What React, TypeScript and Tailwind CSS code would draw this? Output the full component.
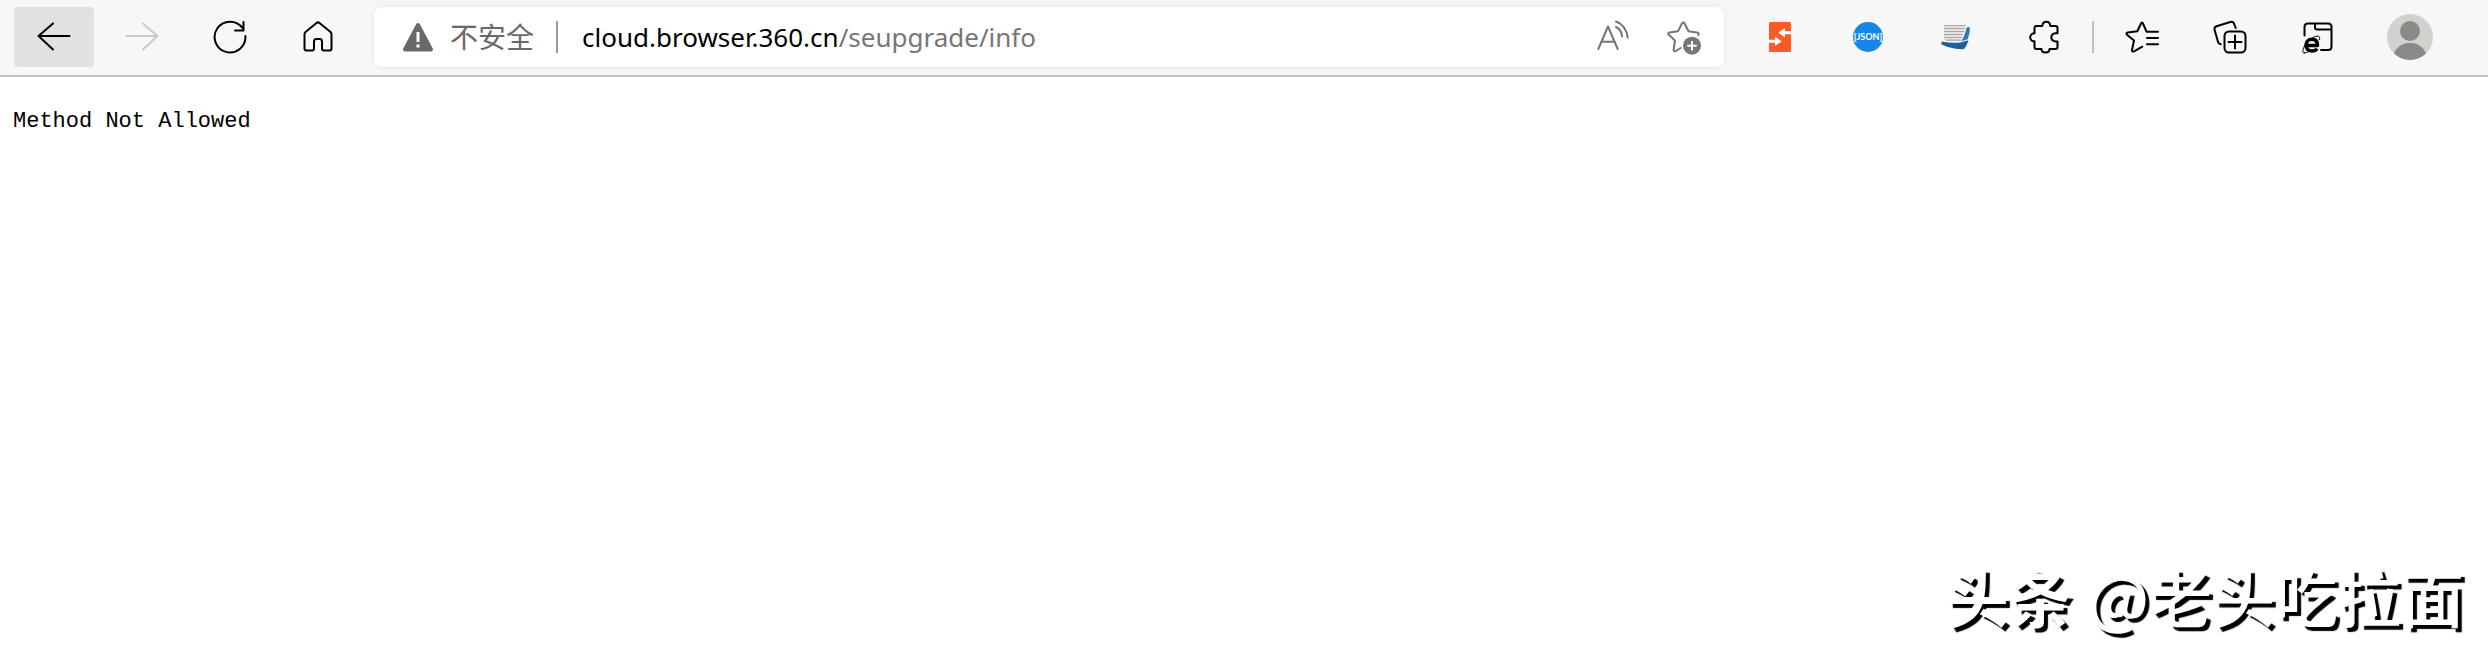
import type { ReactNode } from 'react';
import clsx from 'clsx';

interface IconButtonProps {
    label: string;
    active?: boolean;
    disabled?: boolean;
    children: ReactNode;
}

function IconButton({ label, active, disabled, children }: IconButtonProps) {
    return (
        <button
            type="button"
            aria-label={label}
            disabled={disabled}
            className={clsx(
                'flex h-[60px] w-20 shrink-0 items-center justify-center rounded-sm',
                active && 'bg-[#e1e1e1]',
                disabled ? 'text-[#cccccc]' : 'text-black',
            )}
        >
            {children}
        </button>
    );
}

function Line({ children }: { children: ReactNode }) {
    return (
        <svg viewBox="0 0 36 36" className="size-9" fill="none" stroke="currentColor" strokeWidth="2" strokeLinecap="round" strokeLinejoin="round">
            {children}
        </svg>
    );
}

function AddressBar() {
    return (
        <div className="flex h-[60px] min-w-0 flex-1 items-center rounded-lg bg-white pr-1 pl-7 font-['Noto_Sans','Noto_Sans_CJK_SC',sans-serif] text-[26px] shadow-[0_0_6px_rgba(0,0,0,0.08)]">
            <button type="button" className="flex shrink-0 items-center gap-4 text-[28px] text-[#696969]">
                <svg viewBox="0 0 32 32" className="size-8">
                    <path d="M16 4L29 28.500H3Z" fill="#696969" stroke="#696969" strokeWidth="4" strokeLinejoin="round" />
                    <path d="M16 11V21M16 23.500V26.500" stroke="white" strokeWidth="3" />
                </svg>
                不安全
            </button>
            <span className="mr-6 ml-[22px] h-8 w-0.5 bg-[#999999]" />
            <div role="textbox" aria-label="地址栏" contentEditable suppressContentEditableWarning className="min-w-0 flex-1 overflow-hidden whitespace-nowrap text-[#767676]">
                <span className="text-black">cloud.browser.360.cn</span>/seupgrade/info
            </div>
            <button type="button" aria-label="大声朗读" className="flex w-[72px] justify-center text-[#767676]">
                <Line>
                    <path d="M4.300 30L14 7.500L23.700 30M7.500 22.700H20.500M22 2.500C28 4.500 33 11 33.700 18.500M22 8C26 10 27.800 13.500 28 17.500" />
                </Line>
            </button>
            <button type="button" aria-label="添加到收藏夹" className="flex w-[72px] justify-center text-[#767676]">
                <Line>
                    <path d="M32.300 16Q33.500 13.700 31 13.400L22.500 12.300L18.500 4.300Q17.300 2.500 16.100 4.300L12 12.300L3.500 13.500Q1.300 14 2.800 15.700L9 21.500L7.600 30.500Q7.500 33 9.700 32L14.700 29" />
                    <circle cx="26" cy="26.700" r="9" fill="currentColor" stroke="none" />
                    <path d="M26 22V31.400M21.300 26.700H30.700" stroke="white" strokeLinecap="butt" />
                </Line>
            </button>
        </div>
    );
}

function Extensions() {
    return (
        <>
            <IconButton label="请求重定向">
                <svg viewBox="0 0 36 36" className="size-9">
                    <rect x="7" y="3" width="22" height="30" rx="1.500" fill="#ff5a26" />
                    <path d="M29 12.300H23V9L16.300 13.800L23 18.600V15.300H29ZM7 20.800H13V17.500L19.700 22.300L13 27.100V23.800H7Z" fill="white" />
                </svg>
            </IconButton>
            <IconButton label="JSON">
                <svg viewBox="0 0 36 36" className="size-9">
                    <circle cx="18" cy="18" r="15" fill="#1487e8" />
                    <text x="18" y="21" textAnchor="middle" fill="white" className="font-['Lato',sans-serif] text-[9px] font-bold">[JSON]</text>
                </svg>
            </IconButton>
            <IconButton label="阅读">
                <svg viewBox="0 0 36 36" className="size-9">
                    <path d="M6 6H28L22 22.500L6 21Z" fill="#e2e2e0" />
                    <path d="M6 6.500H28M6 9.500H27M6 12.500H26M6 15.500H25M6 18.500H24M8 21.200H23" stroke="#aaa9a7" strokeWidth="1.200" />
                    <path d="M28.500 9Q30 7.500 32 8.500Q32 15 29.500 20.500L23.500 22Q27 16 28.500 9Z" fill="#2d78b5" />
                    <path d="M3.500 22.500Q14 24.500 22 23.500L30.500 21.300Q29 27 26 30.300Q14 30.500 3.500 25.600Z" fill="#1f619d" />
                </svg>
            </IconButton>
            <IconButton label="扩展">
                <Line>
                    <path d="M10.500 7H16.300C16.500 4.300 18 2.800 20.300 2.800S24.100 4.300 24.300 7H29.500Q31.500 7 31.500 9V14.200H29.500Q25.300 14.800 25.300 18.300T29.500 22.400H31.500V28Q31.500 30 29.500 30H23.500C23.500 32 21.800 33.500 19.500 33.500S15.500 32 15.500 30H10.500Q8.500 30 8.500 28V22.300C6 22.300 4.200 20.600 4.200 18.300S6 14.200 8.500 14.200V9Q8.500 7 10.500 7Z" />
                </Line>
            </IconButton>
        </>
    );
}

function BrowserTools() {
    return (
        <>
            <IconButton label="收藏夹">
                <Line>
                    <path d="M34 12.700H22.500L19 4.500Q18 2.500 17 4.500L13.300 12.300L3.800 13.600Q1.500 14 3 15.700L10 21.500L8 31Q8 33.300 10 32.300L18.300 27.700M23 19H34M23 25.300H34" />
                </Line>
            </IconButton>
            <IconButton label="集锦">
                <Line>
                    <path d="M8.700 25.300Q6.500 25 6 22.800L2.600 11Q2 8.300 4.500 7.300L18.300 3Q21 2.300 22 4.700L23.700 9" />
                    <rect x="12.500" y="12.500" width="21" height="21" rx="4.500" />
                    <path d="M23 16.500V29.500M16.500 23H29.500" />
                </Line>
            </IconButton>
            <IconButton label="Internet Explorer 模式">
                <Line>
                    <path d="M4.500 16.500V8Q4.500 4.500 8 4.500H28Q31.500 4.500 31.500 8V27.500Q31.500 31 28 31H21M15 4.500V8.500Q15 10.500 17 10.500H31.500" />
                    <path d="M6.300 26.500H17.500C17.500 22 15.300 20.200 12 20.200S6 22.800 6 26.300S8.500 32 12 32Q15.500 32 17 29.600" strokeWidth="3.600" strokeLinecap="butt" />
                    <path d="M4.500 34C1.500 35 2.300 29 7 23.500S18.500 15.500 19.600 18.200Q20 19.300 19.300 20.800M4.500 34Q6.500 34 9 32.300" strokeWidth="1" />
                </Line>
            </IconButton>
            <button type="button" aria-label="个人资料" className="flex w-[88px] shrink-0 items-center justify-center">
                <span className="relative size-[46px] overflow-hidden rounded-full bg-[#d2d1ce]">
                    <span className="absolute top-[7px] left-[13px] size-5 rounded-full bg-[#8c8a88]" />
                    <span className="absolute top-[29px] left-[6px] h-8 w-[34px] rounded-full bg-[#8c8a88]" />
                </span>
            </button>
        </>
    );
}

export default function App() {
    return (
        <div className="flex min-h-screen flex-col bg-white">
            <header className="flex items-center border-b-2 border-[#c0c0c0] bg-[#f7f7f7] pt-[7px] pr-[34px] pb-2 pl-[14px]">
                <nav className="flex gap-2 pr-4">
                    <IconButton label="后退" active>
                        <Line><path d="M33.500 17H3M17 4.500L2.500 17L17 30.500" /></Line>
                    </IconButton>
                    <IconButton label="前进" disabled>
                        <Line><path d="M2.500 17H33M19 4.500L33.500 17L19 30.500" /></Line>
                    </IconButton>
                    <IconButton label="刷新">
                        <Line><path d="M33.400 17A15.400 15.400 0 1 1 30.500 9M31.500 3V11.500H23" /></Line>
                    </IconButton>
                    <IconButton label="主页">
                        <Line><path d="M4.500 15.500Q4.500 14 5.500 13L16.500 4Q18 2.800 19.500 4L30.500 13Q31.500 14 31.500 15.500V29.500Q31.500 31.500 29.500 31.500H24Q22 31.500 22 29.500V22.500Q22 20 19.800 20H16.200Q14 20 14 22.500V29.500Q14 31.500 12 31.500H6.500Q4.500 31.500 4.500 29.500Z" /></Line>
                    </IconButton>
                </nav>
                <AddressBar />
                <div className="flex items-center gap-2 pl-4">
                    <Extensions />
                    <span className="h-8 w-0.5 bg-[#c0c0c0]" />
                    <BrowserTools />
                </div>
            </header>

            <main className="flex flex-1 flex-col">
                <pre className="px-[13px] pt-7 font-['Liberation_Mono',monospace] text-[22px] text-black">Method Not Allowed</pre>
                <p className="mt-auto flex gap-4 self-end pr-6 pb-7 font-['Noto_Sans_CJK_SC',sans-serif] text-[63px] leading-none font-medium whitespace-nowrap text-white [text-shadow:4px_4px_1px_#000]">
                    <span className="font-bold">头条</span>
                    <span>@老头吃拉面</span>
                </p>
            </main>
        </div>
    );
}
